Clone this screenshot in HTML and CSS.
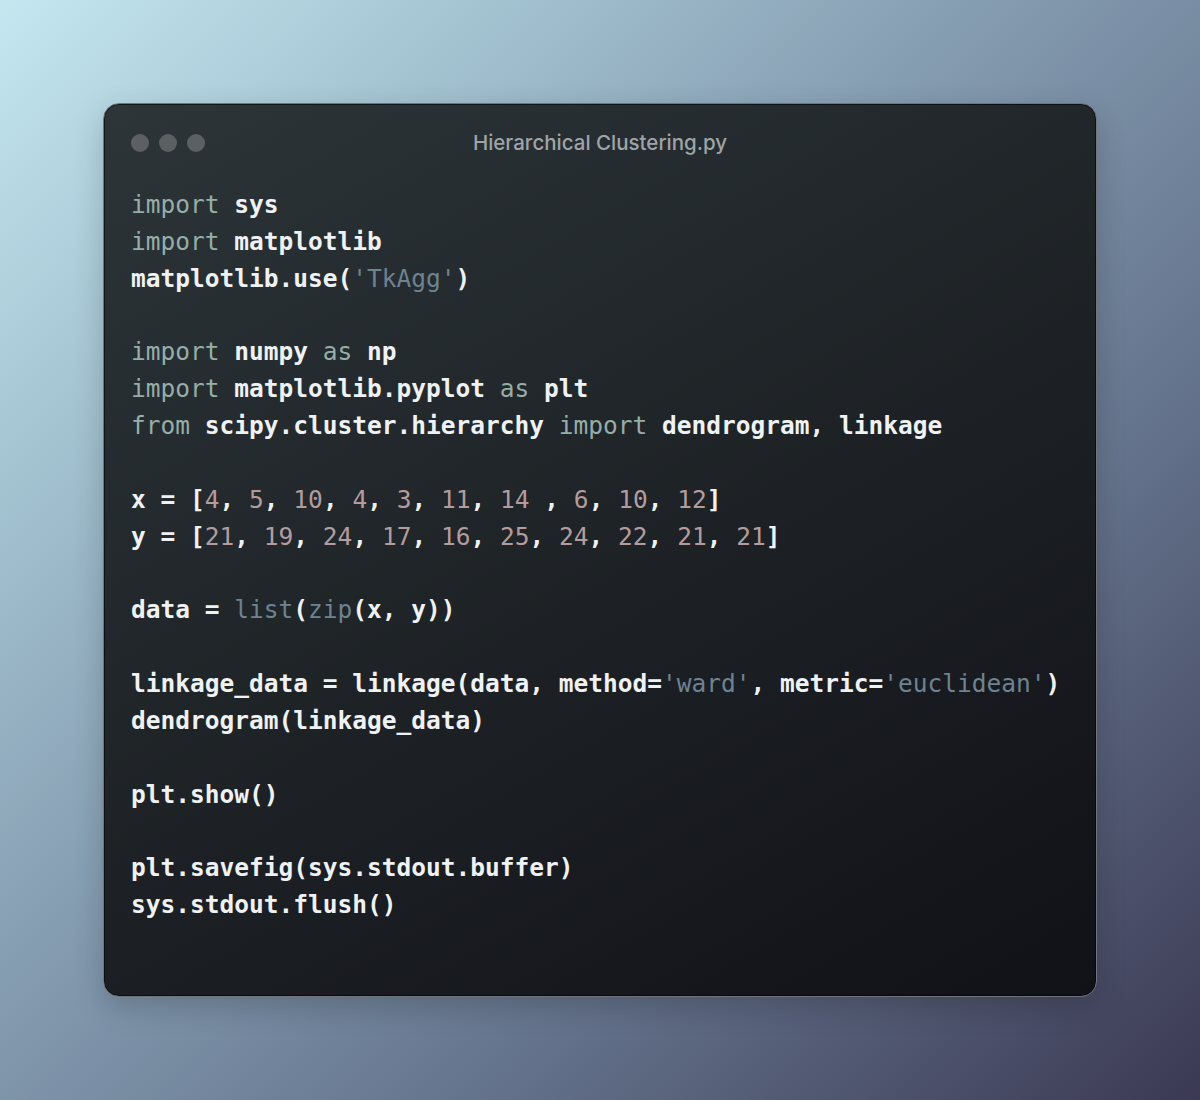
FILE: index.html
```html
<!DOCTYPE html>
<html>
<head>
<meta charset="utf-8">
<link rel="stylesheet" href="styles.css">
</head>
<body>
<div class="stage">
  <div class="window">
    <div class="titlebar">
      <div class="dots"><span class="dot"></span><span class="dot"></span><span class="dot"></span></div>
      <div class="title">Hierarchical Clustering.py</div>
      <div class="spacer"></div>
    </div>
<pre class="code"><span class="kw">import</span> <span class="id">sys</span>
<span class="kw">import</span> <span class="id">matplotlib</span>
<span class="id">matplotlib.use(</span><span class="str">'TkAgg'</span><span class="id">)</span>

<span class="kw">import</span> <span class="id">numpy</span> <span class="kw">as</span> <span class="id">np</span>
<span class="kw">import</span> <span class="id">matplotlib.pyplot</span> <span class="kw">as</span> <span class="id">plt</span>
<span class="kw">from</span> <span class="id">scipy.cluster.hierarchy</span> <span class="kw">import</span> <span class="id">dendrogram, linkage</span>

<span class="id">x = [</span><span class="num">4</span><span class="id">,</span> <span class="num">5</span><span class="id">,</span> <span class="num">10</span><span class="id">,</span> <span class="num">4</span><span class="id">,</span> <span class="num">3</span><span class="id">,</span> <span class="num">11</span><span class="id">,</span> <span class="num">14</span> <span class="id">,</span> <span class="num">6</span><span class="id">,</span> <span class="num">10</span><span class="id">,</span> <span class="num">12</span><span class="id">]</span>
<span class="id">y = [</span><span class="num">21</span><span class="id">,</span> <span class="num">19</span><span class="id">,</span> <span class="num">24</span><span class="id">,</span> <span class="num">17</span><span class="id">,</span> <span class="num">16</span><span class="id">,</span> <span class="num">25</span><span class="id">,</span> <span class="num">24</span><span class="id">,</span> <span class="num">22</span><span class="id">,</span> <span class="num">21</span><span class="id">,</span> <span class="num">21</span><span class="id">]</span>

<span class="id">data =</span> <span class="fn">list</span><span class="id">(</span><span class="fn">zip</span><span class="id">(x, y))</span>

<span class="id">linkage_data = linkage(data, method=</span><span class="str">'ward'</span><span class="id">, metric=</span><span class="str">'euclidean'</span><span class="id">)</span>
<span class="id">dendrogram(linkage_data)</span>

<span class="id">plt.show()</span>

<span class="id">plt.savefig(sys.stdout.buffer)</span>
<span class="id">sys.stdout.flush()</span></pre>
  </div>
</div>
</body>
</html>
```

FILE: styles.css
```css
html, body {
  margin: 0;
  padding: 0;
}

body {
  width: 1200px;
  height: 1100px;
  overflow: hidden;
  background: linear-gradient(135deg, #c4e7f0 0%, #a3c2d0 22%, #8299ae 45%, #65748d 68%, #3b3953 100%);
}

.stage {
  padding: 103px;
  box-sizing: border-box;
  height: 1100px;
}

.window {
  box-sizing: border-box;
  width: 994px;
  height: 894px;
  border-radius: 16px;
  border: 1px solid #70757c;
  box-shadow: inset 0 0 0 1px rgba(0, 0, 0, 0.55), 0 10px 30px rgba(0, 0, 0, 0.18);
  background: linear-gradient(150deg, #2d3538 0%, #22282b 35%, #1a1d21 65%, #111118 100%);
  padding: 26px 27px 0 27px;
}

.titlebar {
  display: grid;
  grid-template-columns: 1fr auto 1fr;
  align-items: center;
  height: 20px;
}

.dots {
  display: flex;
  gap: 10px;
}

.dot {
  width: 18px;
  height: 18px;
  border-radius: 50%;
  background: #5d6063;
}

.title {
  font-family: Inter, "Noto Sans", sans-serif;
  font-size: 20.5px;
  font-weight: 500;
  color: #9fa4a8;
}

.code {
  margin: 37px 0 0 0;
  font-family: "DejaVu Sans Mono", monospace;
  font-size: 24.5px;
  line-height: 36.85px;
  color: #eef1f3;
  white-space: pre;
}

.id {
  color: #eff2f4;
  font-weight: bold;
}

.kw {
  color: #95aea9;
}

.str {
  color: #6d8392;
}

.fn {
  color: #6d8392;
}

.num {
  color: #b49c9e;
}
```
